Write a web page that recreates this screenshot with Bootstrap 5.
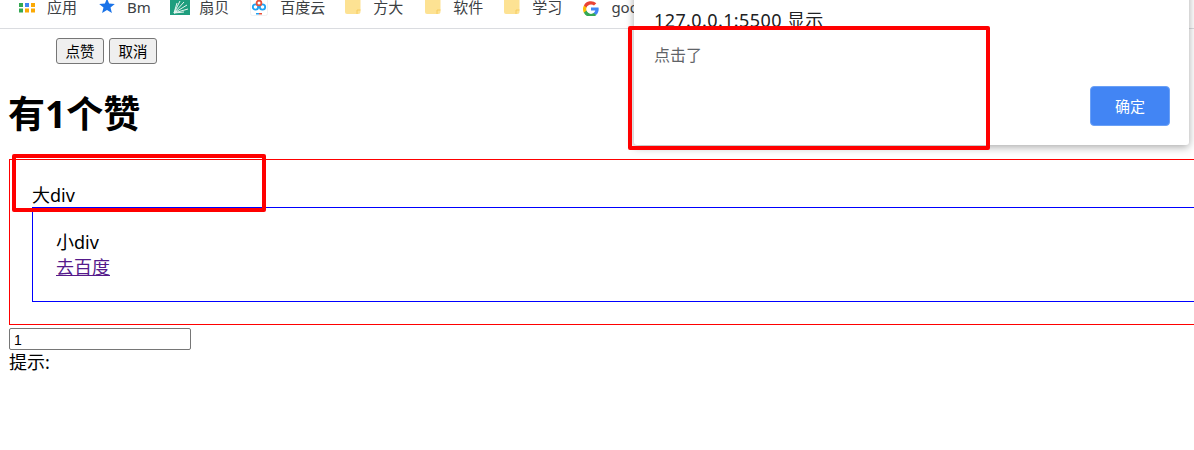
<!DOCTYPE html>
<html lang="zh">
<head>
    <meta charset="UTF-8">
    <title>点赞</title>
    <meta name="viewport" content="width=device-width, initial-scale=1">
    <link href="https://cdn.jsdelivr.net/npm/bootstrap@5.3.3/dist/css/bootstrap.min.css" rel="stylesheet">
    <style>
        html, body { height: 450px; overflow: hidden; }
        body { font-family: "Noto Sans", "Noto Sans CJK SC", sans-serif; font-size: 18px; line-height: 24px; color: #000; background: #fff; position: relative; }
        .bookmarks { height: 29px; padding-left: 18px; gap: 21px; border-bottom: 1px solid #dadce0; font-size: 15px; line-height: 15px; color: #3c4043; white-space: nowrap; overflow: hidden; }
        .mark-item { gap: 12px; }
        .mark-item svg { width: 16px; height: 16px; flex: none; }
        .mark-item .icon-dots { width: 18px; margin-right: -1px; }
        .mark-item .icon-leaf { width: 20px; margin-right: -3px; }
        .mark-item .icon-cloud { width: 18px; }
        .star-item { margin-left: 1px; margin-right: -1.5px; }
        .cloud-item { margin-right: -1px; }
        .folder-first { margin-right: 1px; }
        .page-body { padding: 9px 0 0 9px; }
        .like-row { padding-left: 47px; gap: 5px; height: 26px; }
        .raw-btn { width: 48px; height: 26px; padding: 0; font-size: 14.5px; line-height: 22px; color: #000; background: #efefef; border: 1px solid #767676; border-radius: 3px; }
        .like-title { font-size: 37px; line-height: 50px; font-weight: 700; margin: 25px 0 20px -1px; }
        .big-div { width: 1300px; height: 166px; padding: 23px 0 0 22px; border: 1px solid #f00; }
        .small-div { height: 95px; padding: 22px 0 0 23px; border: 1px solid #00f; }
        .small-div a { color: #551a8b; display: block; margin-top: 1px; }
        .count-input { display: block; width: 182px; height: 22px; margin-top: 3px; padding: 1px 4px 0; font-family: "Liberation Sans", sans-serif; font-size: 14px; line-height: 18px; border: 1px solid #767676; border-radius: 2px; }
        .alert-box { left: 634px; top: -20px; width: 555px; height: 165px; background: #fff; border-radius: 0 0 3px 3px; box-shadow: 0 2px 8px rgba(0,0,0,.35); padding: 29px 20px 0; }
        .alert-title { font-size: 18px; line-height: 22px; letter-spacing: .4px; color: #202124; }
        .alert-msg { font-size: 16px; line-height: 20px; color: #5f6368; margin-top: 14px; }
        .alert-ok { position: absolute; left: 456px; top: 106px; width: 80px; height: 40px; padding: 0; font-size: 15px; color: #fff; background: #4285f4; border: 1px solid #6aa0f6; border-radius: 4px; }
        .red-mark { border: 4px solid #f00; border-radius: 2px; pointer-events: none; }
        .mark-a { left: 12px; top: 154px; width: 254px; height: 58px; }
        .mark-b { left: 628px; top: 26px; width: 362px; height: 124px; }
    </style>
    <script src="https://cdn.jsdelivr.net/npm/bootstrap@5.3.3/dist/js/bootstrap.bundle.min.js"></script>
</head>
<body>
    <div class="bookmarks d-flex align-items-start">
        <div class="mark-item d-flex align-items-start">
            <svg class="icon-dots" viewBox="0 0 18 16"><rect x="1" y="3" width="4" height="4" fill="#34a853"/><rect x="7" y="3" width="4" height="4" fill="#4285f4"/><rect x="13" y="3" width="4" height="4" fill="#fba904"/><rect x="1" y="8.500" width="4" height="4" fill="#34a853"/><rect x="7" y="8.500" width="4" height="4" fill="#fba904"/><rect x="13" y="8.500" width="4" height="4" fill="#fba904"/></svg>
            <span>应用</span>
        </div>
        <div class="mark-item star-item d-flex align-items-start">
            <svg viewBox="0 0 16 16"><path d="M8 -1.500l2.100 5 5.700.4-4.300 3.600 1.400 5.400L8 10.100l-4.900 2.800 1.400-5.400L.2 3.900l5.700-.4z" fill="#1a73e8"/></svg>
            <span>Bm</span>
        </div>
        <div class="mark-item d-flex align-items-start">
            <svg class="icon-leaf" viewBox="0 0 20 16"><rect width="20" height="15" fill="#1f9e7e"/><path d="M4 13L7 3M4 13L10 1M4 13L14 2M4 13L17 5M4 13L18 9M4 13L14 12" stroke="#e8f6f1" stroke-width="1" fill="none"/></svg>
            <span>扇贝</span>
        </div>
        <div class="mark-item cloud-item d-flex align-items-start">
            <svg class="icon-cloud" viewBox="0 0 18 16"><rect x=".5" y="-2" width="17" height="17.500" rx="2" fill="#fff" stroke="#f1f1f1"/><circle cx="5.500" cy="7" r="2.700" fill="none" stroke="#1fa2f3" stroke-width="1.800"/><circle cx="12.500" cy="7" r="2.700" fill="none" stroke="#1fa2f3" stroke-width="1.800"/><circle cx="9" cy="3" r="2.400" fill="none" stroke="#e8503a" stroke-width="1.800"/><rect x="6" y="13" width="3" height="1.500" fill="#1fa2f3"/><rect x="9" y="13" width="3" height="1.500" fill="#e8503a"/></svg>
            <span>百度云</span>
        </div>
        <div class="mark-item folder-first d-flex align-items-start">
            <svg viewBox="0 0 16 16"><path d="M0 0h15.500v12a2 2 0 0 1-2 2H2a2 2 0 0 1-2-2z" fill="#fde293"/><path d="M12 14v-4h3.500" fill="none" stroke="#f6cc5f" stroke-width="1"/></svg>
            <span>方大</span>
        </div>
        <div class="mark-item d-flex align-items-start">
            <svg viewBox="0 0 16 16"><path d="M0 0h15.500v12a2 2 0 0 1-2 2H2a2 2 0 0 1-2-2z" fill="#fde293"/><path d="M12 14v-4h3.500" fill="none" stroke="#f6cc5f" stroke-width="1"/></svg>
            <span>软件</span>
        </div>
        <div class="mark-item d-flex align-items-start">
            <svg viewBox="0 0 16 16"><path d="M0 0h15.500v12a2 2 0 0 1-2 2H2a2 2 0 0 1-2-2z" fill="#fde293"/><path d="M12 14v-4h3.500" fill="none" stroke="#f6cc5f" stroke-width="1"/></svg>
            <span>学习</span>
        </div>
        <div class="mark-item d-flex align-items-start">
            <svg viewBox="0 -2.500 16 16"><path d="M15.700 6.500c0-.6-.1-1.100-.2-1.600H8v3h4.300a3.700 3.700 0 0 1-1.600 2.400v2h2.600c1.500-1.400 2.400-3.400 2.400-5.800z" fill="#4285f4"/><path d="M8 14.500c2.200 0 4-.7 5.300-1.900l-2.600-2c-.7.500-1.600.8-2.700.8-2.100 0-3.800-1.400-4.500-3.300H.9v2.100A8 8 0 0 0 8 14.500z" fill="#34a853"/><path d="M3.500 8.100a4.800 4.800 0 0 1 0-3.100V2.900H.9a8 8 0 0 0 0 7.300z" fill="#fbbc04"/><path d="M8 1.900c1.200 0 2.200.4 3 1.200l2.300-2.300A8 8 0 0 0 .9 2.900L3.500 5C4.200 3.200 5.900 1.900 8 1.900z" fill="#ea4335"/></svg>
            <span>google</span>
        </div>
    </div>

    <div class="page-body">
        <div class="like-row d-flex">
            <button type="button" class="raw-btn">点赞</button>
            <button type="button" class="raw-btn">取消</button>
        </div>
        <h1 class="like-title">有1个赞</h1>
        <div class="big-div">
            大div
            <div class="small-div">
                小div
                <a href="#">去百度</a>
            </div>
        </div>
        <input type="text" class="count-input" value="1">
        <div>提示:</div>
    </div>

    <div class="alert-box position-absolute">
        <div class="alert-title">127.0.0.1:5500 显示</div>
        <div class="alert-msg">点击了</div>
        <button type="button" class="alert-ok">确定</button>
    </div>
    <div class="red-mark mark-a position-absolute"></div>
    <div class="red-mark mark-b position-absolute"></div>
</body>
</html>
